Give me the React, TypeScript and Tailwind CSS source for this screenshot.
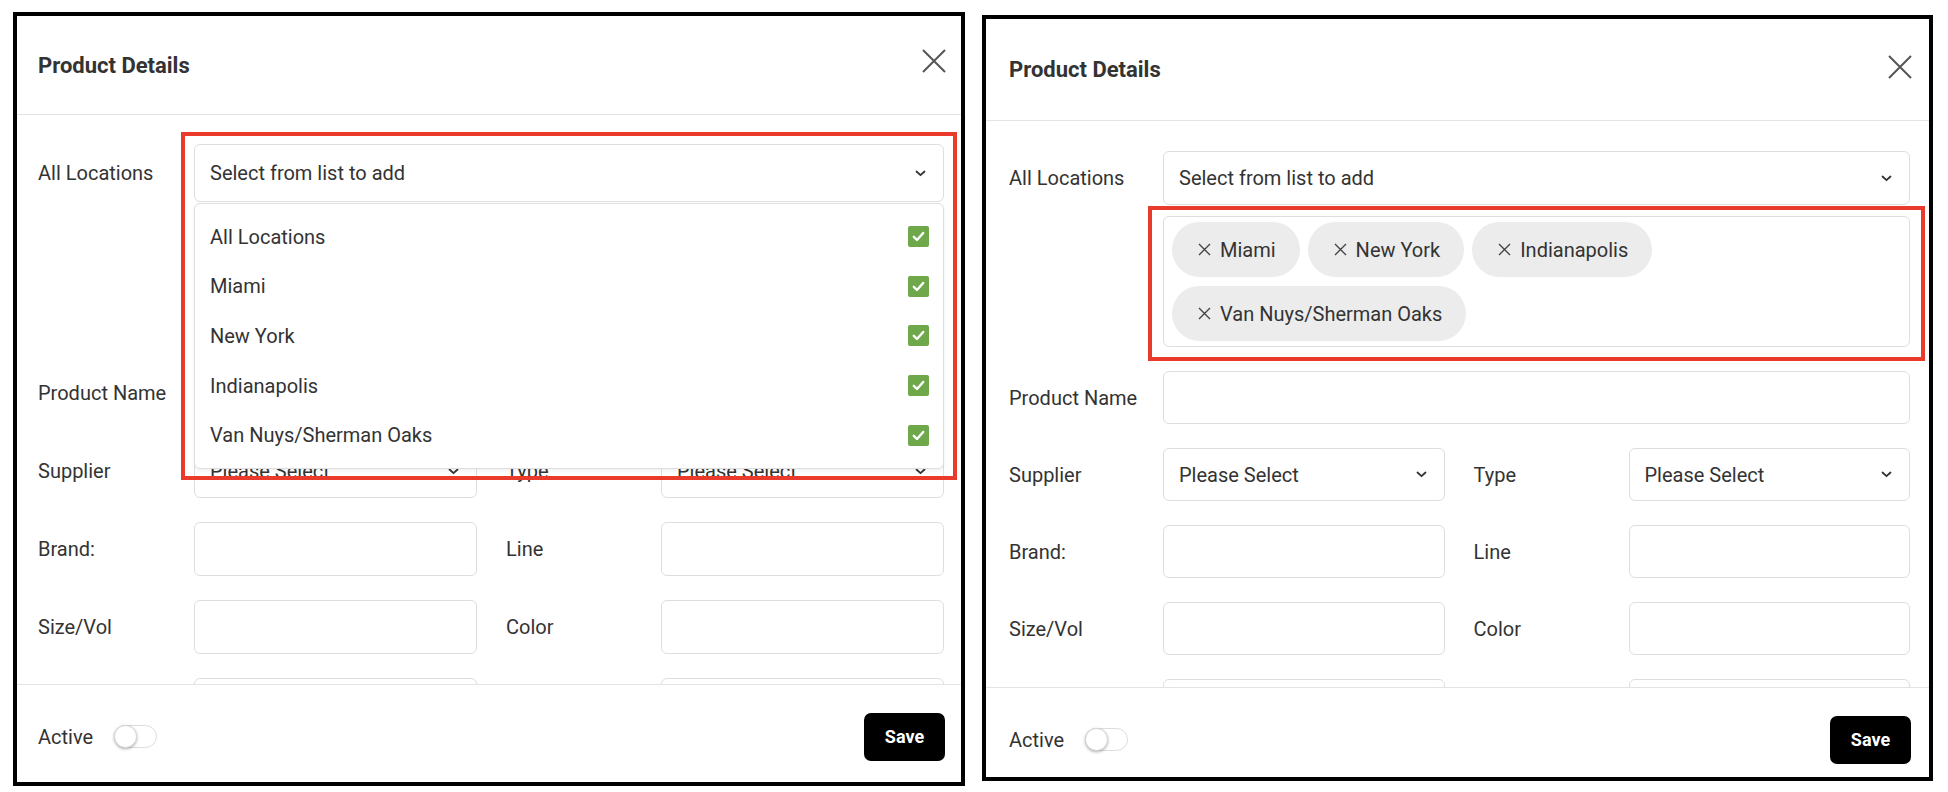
import React from 'react';

const LOCATIONS = ['All Locations', 'Miami', 'New York', 'Indianapolis', 'Van Nuys/Sherman Oaks'];
const SELECTED = ['Miami', 'New York', 'Indianapolis', 'Van Nuys/Sherman Oaks'];

const font = { fontFamily: 'Roboto, "Liberation Sans", sans-serif' };

function Chevron() {
  return (
    <svg width="11" height="7" viewBox="0 0 11 7" fill="none" className="shrink-0">
      <path d="M1.5 1.5 L5.5 5.2 L9.5 1.5" stroke="#333" strokeWidth="1.8" strokeLinecap="round" strokeLinejoin="round" />
    </svg>
  );
}

function CloseIcon() {
  return (
    <svg width="24" height="24" viewBox="0 0 24 24" fill="none">
      <path d="M1 1 L23 23 M23 1 L1 23" stroke="#555" strokeWidth="2" />
    </svg>
  );
}

function SmallX() {
  return (
    <svg width="13" height="13" viewBox="0 0 13 13" fill="none" className="shrink-0">
      <path d="M1 1 L12 12 M12 1 L1 12" stroke="#444" strokeWidth="1.4" />
    </svg>
  );
}

function CheckedBox() {
  return (
    <span className="flex h-[21px] w-[21px] items-center justify-center rounded-[2px] bg-[#6ea84b]">
      <svg width="13" height="11" viewBox="0 0 13 11" fill="none">
        <path d="M1.8 5.8 L5 9 L11.2 2" stroke="white" strokeWidth="2.4" strokeLinecap="round" strokeLinejoin="round" />
      </svg>
    </span>
  );
}

function Toggle() {
  return (
    <span className="relative inline-block h-[23px] w-[43px] rounded-full border border-[#dcdcdc] bg-white">
      <span className="absolute left-[-1px] top-[-1px] h-[23px] w-[23px] rounded-full border border-[#d6d6d6] bg-white shadow-[0_1px_3px_rgba(0,0,0,0.3)]" />
    </span>
  );
}

function SelectBox({ text, h }: { text: string; h: string }) {
  return (
    <div className={`flex ${h} items-center justify-between rounded-[6px] border border-[#dedede] bg-white pl-[15px] pr-[17px] text-[20px] text-[#333]`}>
      <span>{text}</span>
      <Chevron />
    </div>
  );
}

function TextBox({ h }: { h: string }) {
  return <div className={`${h} rounded-[6px] border border-[#dedede] bg-white`} />;
}

type PanelProps = {
  open: boolean;
  outer: string;
  headerH: string;
  padL: string;
  padR: string;
  bodyR: string;
  closeShift: string;
  bodyTop: string;
  labelCol: string;
  grid: string;
  selectH: string;
  inputH: string;
  tagsGap: string;
  afterTags: string;
  footer: string;
  footerR: string;
  redBox: string;
};

// the last row sits under the footer line, only its boxes peek out
const ROWS: [string, string, string, string][] = [
  ['Supplier', 'select', 'Type', 'select'],
  ['Brand:', 'input', 'Line', 'input'],
  ['Size/Vol', 'input', 'Color', 'input'],
  ['', 'input', '', 'input'],
];

function Panel(p: PanelProps) {
  return (
    <div className={`relative flex shrink-0 flex-col border-4 border-black bg-white ${p.outer}`}>
      {/* Header */}
      <div className={`flex ${p.headerH} shrink-0 items-center justify-between border-b border-[#e3e3e3] ${p.padL} ${p.padR}`}>
        <h2 className="text-[22px] font-bold text-[#333]">Product Details</h2>
        <button className={p.closeShift}>
          <CloseIcon />
        </button>
      </div>

      {/* Body */}
      <div className={`min-h-0 flex-1 overflow-hidden ${p.bodyTop} ${p.padL} ${p.bodyR}`}>
        <div className="relative flex items-center">
          <div className={`${p.labelCol} shrink-0 text-[20px] text-[#333]`}>All Locations</div>
          <div className="relative flex-1">
            <SelectBox text="Select from list to add" h={p.selectH} />
            {p.open && (
              <div className="absolute left-0 right-0 top-[calc(100%+1px)] z-10 rounded-[6px] border border-[#dedede] bg-white py-[8px] shadow-[0_2px_4px_rgba(0,0,0,0.06)]">
                {LOCATIONS.map((loc) => (
                  <div key={loc} className="flex h-[49.6px] items-center justify-between pl-[15px] pr-[14px] text-[20px] text-[#333]">
                    <span>{loc}</span>
                    <CheckedBox />
                  </div>
                ))}
              </div>
            )}
          </div>
        </div>

        <div className={`flex ${p.tagsGap}`}>
          <div className={`${p.labelCol} shrink-0`} />
          <div className="flex h-[131px] flex-1 flex-wrap content-start gap-x-[8px] gap-y-[9px] rounded-[6px] border border-[#dedede] px-[8px] pt-[5px]">
            {!p.open &&
              SELECTED.map((s) => (
                <span key={s} className="flex h-[55px] items-center gap-[9px] rounded-full bg-[#ececec] pl-[26px] pr-[24px] text-[20px] text-[#333]">
                  <SmallX />
                  {s}
                </span>
              ))}
          </div>
        </div>

        <div className={`flex items-center ${p.afterTags}`}>
          <div className={`${p.labelCol} shrink-0 text-[20px] text-[#333]`}>Product Name</div>
          <div className="flex-1">
            <TextBox h={p.inputH} />
          </div>
        </div>

        {ROWS.map(([l1, k1, l2, k2], i) => (
          <div key={i} className={`mt-[24px] grid items-center ${p.grid} text-[20px] text-[#333]`}>
            <div>{l1}</div>
            {k1 === 'select' ? <SelectBox text="Please Select" h={p.inputH} /> : <TextBox h={p.inputH} />}
            <div className="pl-[29px]">{l2}</div>
            {k2 === 'select' ? <SelectBox text="Please Select" h={p.inputH} /> : <TextBox h={p.inputH} />}
          </div>
        ))}
      </div>

      {/* Footer */}
      <div className={`flex shrink-0 items-center justify-between border-t border-[#e3e3e3] ${p.footer} ${p.padL} ${p.footerR}`}>
        <div className="flex items-center gap-[21px]">
          <span className="text-[20px] text-[#333]">Active</span>
          <Toggle />
        </div>
        <button className="flex h-[48px] w-[81px] items-center justify-center rounded-[7px] bg-black text-[18px] font-bold text-white">
          Save
        </button>
      </div>

      {/* Highlight */}
      <div className={`pointer-events-none absolute z-20 border-4 border-[#e93a2c] ${p.redBox}`} />
    </div>
  );
}

export default function App() {
  return (
    <div className="flex min-h-screen items-start gap-[17px] bg-white pl-[13px]" style={font}>
      <Panel
        open
        outer="mt-[12px] h-[774px] w-[952px]"
        headerH="h-[99px]"
        padL="pl-[21px]"
        padR="pr-[15px]"
        bodyR="pr-[17px]"
        closeShift="mb-[8px]"
        bodyTop="pt-[29px]"
        labelCol="w-[156px]"
        grid="grid-cols-[156px_1fr_184px_1fr]"
        selectH="h-[58px]"
        inputH="h-[54px]"
        tagsGap="mt-[10px]"
        afterTags="mt-[23px]"
        footer="h-[98px] pt-[6px]"
        footerR="pr-[16px]"
        redBox="left-[164px] top-[116px] h-[348px] w-[776px]"
      />
      <Panel
        open={false}
        outer="mt-[15px] h-[766px] w-[951px]"
        headerH="h-[102px]"
        padL="pl-[23px]"
        padR="pr-[17px]"
        bodyR="pr-[19px]"
        closeShift="mb-[6px]"
        bodyTop="pt-[30px]"
        labelCol="w-[154px]"
        grid="grid-cols-[154px_1fr_184px_1fr]"
        selectH="h-[54px]"
        inputH="h-[53px]"
        tagsGap="mt-[11px]"
        afterTags="mt-[24px]"
        footer="h-[90px] pt-[14px]"
        footerR="pr-[18px]"
        redBox="left-[162px] top-[187px] h-[155px] w-[777px]"
      />
    </div>
  );
}
